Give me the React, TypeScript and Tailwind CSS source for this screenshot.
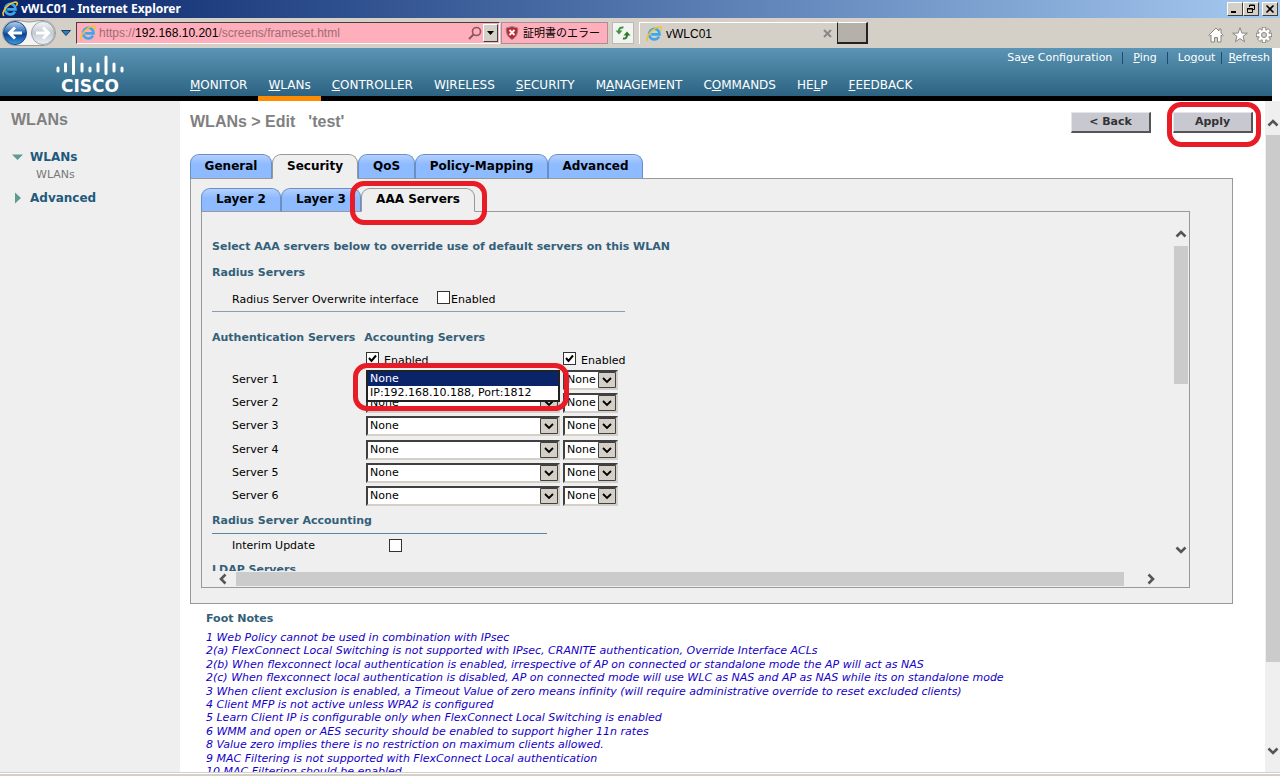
import type { ReactNode } from "react";
import clsx from "clsx";

const navItems = [
  { before: "", key: "M", after: "ONITOR" },
  { before: "", key: "W", after: "LANs", active: true },
  { before: "", key: "C", after: "ONTROLLER" },
  { before: "W", key: "I", after: "RELESS" },
  { before: "", key: "S", after: "ECURITY" },
  { before: "M", key: "A", after: "NAGEMENT" },
  { before: "C", key: "O", after: "MMANDS" },
  { before: "HE", key: "L", after: "P" },
  { before: "", key: "F", after: "EEDBACK" },
];

const mainTabs = [
  { label: "General", width: "w-[82px]" },
  { label: "Security", width: "w-[86px]", active: true },
  { label: "QoS", width: "w-[57px]" },
  { label: "Policy-Mapping", width: "w-[133px]" },
  { label: "Advanced", width: "w-[95px]" },
];

const footNotes = [
  "1 Web Policy cannot be used in combination with IPsec",
  "2(a) FlexConnect Local Switching is not supported with IPsec, CRANITE authentication, Override Interface ACLs",
  "2(b) When flexconnect local authentication is enabled, irrespective of AP on connected or standalone mode the AP will act as NAS",
  "2(c) When flexconnect local authentication is disabled, AP on connected mode will use WLC as NAS and AP as NAS while its on standalone mode",
  "3 When client exclusion is enabled, a Timeout Value of zero means infinity (will require administrative override to reset excluded clients)",
  "4 Client MFP is not active unless WPA2 is configured",
  "5 Learn Client IP is configurable only when FlexConnect Local Switching is enabled",
  "6 WMM and open or AES security should be enabled to support higher 11n rates",
  "8 Value zero implies there is no restriction on maximum clients allowed.",
  "9 MAC Filtering is not supported with FlexConnect Local authentication",
  "10 MAC Filtering should be enabled.",
];

const IconIE = () => (
  <svg viewBox="0 0 16 16" className="size-4 shrink-0" aria-hidden="true">
    <path
      d="M13 10.6A5.3 5.3 0 1 1 13.6 8.4H5.2"
      fill="none"
      stroke="#3fa6e8"
      strokeWidth="2.6"
    />
    <path
      d="M2 14.8C-.6 13 2.6 7 7 3.8 10.6 1.2 15 .2 15.2 2.2c.1.8-.3 1.8-.9 2.6"
      fill="none"
      stroke="#f2c230"
      strokeWidth="1.6"
    />
  </svg>
);

const IconBackForward = () => (
  <svg viewBox="0 0 58 28" className="h-7 w-[58px] shrink-0" aria-hidden="true">
    <defs>
      <linearGradient id="backBall" x1="0" y1="0" x2="0" y2="1">
        <stop offset="0" stopColor="#b9d3ee" />
        <stop offset=".45" stopColor="#2f6fb8" />
        <stop offset=".55" stopColor="#0d3f92" />
        <stop offset="1" stopColor="#3aa0e6" />
      </linearGradient>
      <linearGradient id="forwardBall" x1="0" y1="0" x2="0" y2="1">
        <stop offset="0" stopColor="#f5f7f9" />
        <stop offset=".5" stopColor="#c3cad2" />
        <stop offset="1" stopColor="#eef2f6" />
      </linearGradient>
    </defs>
    <path
      d="M15 1.500C21 1 23 3 29 3s8-2 14-1.500A12.500 12.500 0 0 1 43 26.500H15A12.500 12.500 0 0 1 15 1.500Z"
      fill="#f4f4f2"
      stroke="#9a9a98"
    />
    <circle cx="15" cy="14" r="11.500" fill="url(#backBall)" stroke="#1d4a86" />
    <path
      d="M22 14H10M15 8.500 9.500 14l5.500 5.500"
      fill="none"
      stroke="#fff"
      strokeWidth="3"
    />
    <circle cx="43" cy="14" r="11.500" fill="url(#forwardBall)" stroke="#9aa3ad" />
    <path
      d="M36 14h12M43 8.500 48.500 14 43 19.500"
      fill="none"
      stroke="#fff"
      strokeWidth="3"
    />
  </svg>
);

const IconShield = () => (
  <svg viewBox="0 0 14 14" className="size-[14px] shrink-0" aria-hidden="true">
    <path
      d="M7 .5 12.800 2c.3 5-1.300 9-5.800 11.500C2.500 11 .9 7 1.200 2Z"
      fill="#c3242f"
      stroke="#8d8d8d"
    />
    <path d="m4.500 4 5 5m0-5-5 5" stroke="#fff" strokeWidth="1.800" />
  </svg>
);

const IconSearch = () => (
  <svg viewBox="0 0 14 14" className="size-[14px] shrink-0" aria-hidden="true">
    <circle cx="8.500" cy="5.500" r="4" fill="none" stroke="#8c5560" strokeWidth="1.600" />
    <path d="M5.500 8.500 1 13" stroke="#8c5560" strokeWidth="2" />
  </svg>
);

// one arrow up on the left, one down on the right
const IconRefresh = () => (
  <svg viewBox="0 0 16 16" className="size-4" aria-hidden="true">
    <path d="M8.500 2.500C5.500 2 4 3.500 4 6" fill="none" stroke="#3f9440" strokeWidth="2" />
    <path d="M.5 5.500h7L4 9.500Z" fill="#3f9440" />
    <path d="M8 13.500c3 .5 4-1 4-3.500" fill="none" stroke="#2a7a2c" strokeWidth="2" />
    <path d="M8.500 10.500h7L12 6.500Z" fill="#2a7a2c" />
  </svg>
);

const IconHome = () => (
  <svg viewBox="0 0 16 16" className="size-4" aria-hidden="true">
    <path
      d="M8 1 .8 8.200l1 1L3 8v7h3.500v-4.500h3V15H13V8l1.200 1.200 1-1L13 6V2h-2v2Z"
      fill="#fff"
      stroke="#8a8680"
    />
  </svg>
);

const IconStar = () => (
  <svg viewBox="0 0 16 16" className="size-4" aria-hidden="true">
    <path
      d="m8 .8 1.900 5.300h5.500L11 9.400l1.600 5.400L8 11.600l-4.600 3.200L5 9.400.6 6.100h5.500Z"
      fill="#fff"
      stroke="#8a8680"
    />
  </svg>
);

const IconGear = () => (
  <svg viewBox="0 0 16 16" className="size-4" aria-hidden="true">
    <g stroke="#8a8680" strokeWidth="4.400">
      <path d="M8 0v16M0 8h16M2.500 2.500l11 11M13.500 2.500l-11 11" />
    </g>
    <g stroke="#fff" strokeWidth="2.600">
      <path d="M8 .8v14.400M.8 8h14.400M3 3l10 10M13 3 3 13" />
    </g>
    <circle cx="8" cy="8" r="5" fill="#fff" />
    <circle cx="8" cy="8" r="2.500" fill="#d4d0c8" stroke="#8a8680" />
  </svg>
);

const CiscoBars = () => (
  <svg viewBox="0 0 68 20" className="h-5 w-[68px]" aria-hidden="true">
    <g stroke="#fff" strokeWidth="3" strokeLinecap="round">
      <path d="M2 13v3M9.500 9v7M17.500 2v16.500M26 9v7M34 13v3M42 9v7M50 2v16.500M58 9v7M66 13v3" />
    </g>
  </svg>
);

const turns = {
  up: "rotate-0",
  right: "rotate-90",
  down: "rotate-180",
  left: "-rotate-90",
};

const ScrollArrow = ({ dir }: { dir: keyof typeof turns }) => (
  <button
    type="button"
    aria-label={`Scroll ${dir}`}
    className="flex size-4 shrink-0 items-center justify-center"
  >
    <svg viewBox="0 0 12 12" className={clsx("size-3", turns[dir])}>
      <path d="M1.500 8.500 6 4l4.500 4.500" fill="none" stroke="#555" strokeWidth="2.600" />
    </svg>
  </button>
);

const Highlight = ({ className }: { className: string }) => (
  <span
    className={clsx(
      "pointer-events-none absolute rounded-[14px] border-[5px] border-[#e81c26]",
      className,
    )}
  />
);

const WindowButton = ({ label, children }: { label: string; children: ReactNode }) => (
  <button
    type="button"
    aria-label={label}
    className="flex h-[14px] w-4 items-center justify-center border border-t-white border-r-[#404040] border-b-[#404040] border-l-white bg-[#d4d0c8]"
  >
    <svg viewBox="0 0 10 10" className="size-[10px]" fill="none" stroke="#000">
      {children}
    </svg>
  </button>
);

const CheckBox = ({ id, checked }: { id: string; checked?: boolean }) => (
  <span className="relative flex size-[13px] shrink-0">
    <input
      id={id}
      type="checkbox"
      defaultChecked={checked}
      className="peer size-[13px] appearance-none border border-[#333] bg-white"
    />
    <svg
      viewBox="0 0 13 13"
      className="pointer-events-none absolute inset-0 hidden peer-checked:block"
      aria-hidden="true"
    >
      <path d="m3 6 2.500 3L10 3.500" fill="none" stroke="#000" strokeWidth="2" />
    </svg>
  </span>
);

const ServerSelect = ({ label, className }: { label: string; className: string }) => (
  <div className={clsx("relative h-5", className)}>
    <select
      aria-label={label}
      className="block h-5 w-full appearance-none border-2 border-t-[#404040] border-r-[#d4d0c8] border-b-[#d4d0c8] border-l-[#404040] bg-white pl-[2px] text-[11px] leading-4"
    >
      <option>None</option>
      <option>IP:192.168.10.188, Port:1812</option>
    </select>
    <svg
      viewBox="0 0 18 16"
      className="pointer-events-none absolute top-[2px] right-[2px] h-4 w-[18px]"
      aria-hidden="true"
    >
      <path d="M.5.5h17v15H.5z" fill="#d4d0c8" stroke="#404040" />
      <path d="m5 6 4 4 4-4" fill="none" stroke="#000" strokeWidth="1.800" />
    </svg>
  </div>
);

const Tab = ({
  active,
  className,
  children,
}: {
  active?: boolean;
  className: string;
  children: ReactNode;
}) => (
  <button
    type="button"
    role="tab"
    aria-selected={!!active}
    className={clsx(
      "rounded-t-[9px] border pb-[2px] text-[12px] leading-4 font-bold text-black",
      active
        ? "border-[#999] border-b-[#efefef] bg-[#efefef]"
        : "border-[#6a8fc4] border-b-[#999] bg-linear-to-b from-[#b5d0ff] to-[#8ebbff] to-40%",
      className,
    )}
  >
    {children}
  </button>
);

const TitleBar = () => (
  <div className="flex h-[18px] shrink-0 items-center bg-linear-to-r from-[#0a246a] to-[#a6caf0] pr-[2px] pl-[2px]">
    <IconIE />
    <h1 className="ml-[3px] font-['Noto_Sans',sans-serif] text-[12px] leading-4 font-bold text-white">
      vWLC01 - Internet Explorer
    </h1>
    <div className="ml-auto flex">
      <WindowButton label="Minimize">
        <path d="M1 8h5" strokeWidth="2" />
      </WindowButton>
      <WindowButton label="Restore">
        <path d="M3.500 3V1h5v4.500H7M1.500 4.500h5v4h-5zM3 1.500h6M1 5h6" />
      </WindowButton>
      <span className="w-[3px]" />
      <WindowButton label="Close">
        <path d="m1.500 1.500 7 7m0-7-7 7" strokeWidth="1.600" />
      </WindowButton>
    </div>
  </div>
);

const BrowserBar = () => (
  <div className="flex h-[30px] shrink-0 items-center bg-[#d4d0c8] font-['Liberation_Sans','Noto_Sans_CJK_JP',sans-serif] text-[12px] leading-4">
    <IconBackForward />
    <svg viewBox="0 0 10 6" className="mx-[3px] h-[6px] w-[10px]" aria-hidden="true">
      <path d="M.5.5h9L5 5.500Z" fill="#2b7cc0" stroke="#1a3f66" />
    </svg>
    <div className="ml-[2px] flex h-[22px] w-[424px] items-center border border-t-[#404040] border-r-white border-b-white border-l-[#404040] bg-[#ffaebb] pl-[3px]">
      <IconIE />
      <p className="ml-[3px] flex-1 text-[#a06c76]">
        https://<span className="text-black">192.168.10.201</span>/screens/frameset.html
      </p>
      <IconSearch />
      <button
        type="button"
        aria-label="Show address list"
        className="mx-[1px] flex h-[18px] w-[15px] items-center justify-center border border-t-white border-r-[#404040] border-b-[#404040] border-l-white bg-[#d4d0c8]"
      >
        <svg viewBox="0 0 7 4" className="h-1 w-[7px]">
          <path d="M0 0h7L3.500 4Z" />
        </svg>
      </button>
    </div>
    <button
      type="button"
      className="ml-px flex h-[22px] w-[107px] items-center gap-[4px] border border-[#b08a9c] bg-[#ffaebb] pl-[3px] text-[11px] whitespace-nowrap"
    >
      <IconShield />
      証明書のエラー
    </button>
    <button
      type="button"
      aria-label="Refresh"
      className="ml-1 flex h-[22px] w-[22px] items-center justify-center border border-[#b9b9b9] bg-[#f2f4f2]"
    >
      <IconRefresh />
    </button>
    <div className="ml-[5px] flex h-[22px] w-[198px] items-center border-t border-l border-white pl-[6px]">
      <IconIE />
      <span className="ml-1">vWLC01</span>
      <button type="button" aria-label="Close tab" className="mr-[5px] ml-auto">
        <svg viewBox="0 0 9 9" className="size-[9px]">
          <path d="m1 1 7 7m0-7-7 7" stroke="#888" strokeWidth="2" />
        </svg>
      </button>
    </div>
    <button
      type="button"
      aria-label="New tab"
      className="h-[22px] w-[31px] border border-t-white border-r-2 border-r-[#222] border-b-2 border-b-[#222] border-l-[#222] bg-[#b5b1aa]"
    />
    <div className="mt-1 mr-2 ml-auto flex gap-2">
      <IconHome />
      <IconStar />
      <IconGear />
    </div>
  </div>
);

const Header = () => (
  <header className="mr-2 flex h-[53px] shrink-0 bg-[linear-gradient(#5b94b4,#2c6382_48px,#000_48px)] text-white">
    <div className="flex w-[180px] shrink-0 flex-col items-center pt-[7px]">
      <CiscoBars />
      <span className="mt-px text-[17px] leading-[20px] font-bold">CISCO</span>
    </div>
    <nav className="flex items-end gap-px">
      {navItems.map((item) => (
        <a
          key={item.before + item.key + item.after}
          href="#"
          className={clsx(
            "border-b-[5px] px-[10px] pb-[3px] text-[12px] leading-4",
            item.active ? "border-[#ff8c00]" : "border-transparent",
          )}
        >
          {item.before}
          <u>{item.key}</u>
          {item.after}
        </a>
      ))}
    </nav>
    <div className="mt-[2px] mr-[2px] ml-auto flex h-4 items-center text-[11px] leading-4 whitespace-nowrap">
      <a href="#">
        Sa<u>v</u>e Configuration
      </a>
      <span className="mx-[10px] h-3 w-px bg-[#1c4a78]" />
      <a href="#">
        <u>P</u>ing
      </a>
      <span className="mx-[10px] h-3 w-px bg-[#1c4a78]" />
      <a href="#">
        Lo<u>g</u>out
      </a>
      <span className="mx-[6px] h-3 w-px bg-[#1c4a78]" />
      <a href="#">
        <u>R</u>efresh
      </a>
    </div>
  </header>
);

const Sidebar = () => (
  <aside className="w-[180px] shrink-0 bg-[#efefef] text-[#1f5a7c]">
    <h2 className="mt-[9px] ml-[11px] font-['Liberation_Sans',sans-serif] text-[16px] leading-5 font-bold text-[#808080]">
      WLANs
    </h2>
    <a href="#" className="mt-[19px] ml-3 flex items-center text-[12px] leading-4 font-bold">
      <svg viewBox="0 0 12 12" className="mr-[6px] size-3">
        <path d="M0 3.500h11L5.500 9Z" fill="#5f9a94" />
      </svg>
      WLANs
    </a>
    <a href="#" className="mt-[2px] ml-9 block text-[11px] leading-4 text-[#777]">
      WLANs
    </a>
    <a href="#" className="mt-[7px] ml-3 flex items-center text-[12px] leading-4 font-bold">
      <svg viewBox="0 0 12 12" className="mr-[6px] size-3">
        <path d="M3 .5v11L9 6Z" fill="#5f9a94" />
      </svg>
      Advanced
    </a>
  </aside>
);

const ServerTable = () => (
  <table className="text-left">
    <thead>
      <tr className="h-[23px] align-bottom">
        <td className="w-[154px] p-0" />
        <th className="w-[197px] p-0 font-normal">
          <div className="flex gap-[5px]">
            <CheckBox id="auth-enabled" checked />
            <label htmlFor="auth-enabled" className="mt-[2px]">
              Enabled
            </label>
          </div>
        </th>
        <th className="p-0 font-normal">
          <div className="flex gap-[5px]">
            <CheckBox id="acct-enabled" checked />
            <label htmlFor="acct-enabled" className="mt-[2px]">
              Enabled
            </label>
          </div>
        </th>
      </tr>
    </thead>
    <tbody className="h-[140px]">
      {[1, 2, 3, 4, 5, 6].map((n) => (
        <tr key={n}>
          <th className="p-0 pl-5 font-normal">Server {n}</th>
          <td className="relative p-0">
            <ServerSelect label={`Authentication server ${n}`} className="w-[194px]" />
            {n === 1 && (
              <>
                <ul
                  role="listbox"
                  aria-label="Authentication server 1 options"
                  className="absolute top-[2px] left-0 z-10 w-[194px] border-2 border-[#222] bg-white leading-[14px]"
                >
                  <li role="option" aria-selected="true" className="bg-[#0a246a] pl-[2px] text-white">
                    None
                  </li>
                  <li role="option" aria-selected="false" className="pl-[2px]">
                    IP:192.168.10.188, Port:1812
                  </li>
                </ul>
                <Highlight className="-top-[5px] -left-[13px] z-20 h-[48px] w-[216px]" />
              </>
            )}
          </td>
          <td className="p-0">
            <ServerSelect label={`Accounting server ${n}`} className="w-[55px]" />
          </td>
        </tr>
      ))}
    </tbody>
  </table>
);

const AaaPanel = () => (
  <section className="-mt-px border border-[#999]">
    <div className="flex h-[359px]">
      <div className="flex-1 overflow-hidden pt-7 pl-[10px] text-[11px] leading-[14px] text-black">
        <h3 className="font-bold text-[#336079]">
          Select AAA servers below to override use of default servers on this WLAN
        </h3>
        <h3 className="mt-3 font-bold text-[#336079]">Radius Servers</h3>
        <div className="mt-[11px] flex h-[21px] w-[413px] border-b border-[#8e9bb0] pl-5">
          <label htmlFor="overwrite" className="mt-[2px] w-[205px]">
            Radius Server Overwrite interface
          </label>
          <CheckBox id="overwrite" />
          <label htmlFor="overwrite" className="mt-[2px] ml-px">
            Enabled
          </label>
        </div>
        <div className="mt-[19px] flex gap-[9px] font-bold text-[#336079]">
          <h3>Authentication Servers</h3>
          <h3>Accounting Servers</h3>
        </div>
        <ServerTable />
        <h3 className="mt-[6px] w-[335px] border-b border-[#5c86a0] pb-[5px] font-bold text-[#336079]">
          Radius Server Accounting
        </h3>
        <div className="mt-[5px] flex pl-5">
          <label htmlFor="interim" className="w-[157px]">
            Interim Update
          </label>
          <CheckBox id="interim" />
        </div>
        <h3 className="mt-[10px] font-bold text-[#336079]">LDAP Servers</h3>
      </div>
      <div className="mt-[14px] mr-px mb-[13px] flex w-[14px] flex-col items-center">
        <ScrollArrow dir="up" />
        <span className="mt-1 h-[138px] w-[14px] bg-[#cbcbcb]" />
        <span className="flex-1" />
        <ScrollArrow dir="down" />
      </div>
    </div>
    <div className="mb-px flex h-[15px] items-center pr-[30px] pl-[13px]">
      <ScrollArrow dir="left" />
      <span className="mr-[19px] ml-[5px] h-[14px] flex-1 bg-[#cbcbcb]" />
      <ScrollArrow dir="right" />
    </div>
  </section>
);

const BevelButton = ({ children }: { children: ReactNode }) => (
  <button
    type="button"
    className="h-[21px] w-20 border border-t-[#e4e4ea] border-r-2 border-r-[#555] border-b-2 border-b-[#555] border-l-[#e4e4ea] bg-[#c8c8d0] text-[11px] leading-4 font-bold text-[#333]"
  >
    {children}
  </button>
);

const Main = () => (
  <main className="flex-1 overflow-hidden bg-white pl-[10px]">
    <div className="flex items-start pt-[11px] pr-3">
      <h2 className="flex gap-[13px] font-['Liberation_Sans',sans-serif] text-[16px] leading-5 font-bold text-[#808080]">
        <span>WLANs &gt; Edit</span>
        <span>'test'</span>
      </h2>
      <div className="ml-auto flex gap-[22px]">
        <BevelButton>&lt; Back</BevelButton>
        <div className="relative flex">
          <BevelButton>Apply</BevelButton>
          <Highlight className="-top-[10px] -left-[6px] h-[45px] w-[94px]" />
        </div>
      </div>
    </div>
    <div role="tablist" className="mt-[21px] flex">
      {mainTabs.map((tab) => (
        <Tab key={tab.label} active={tab.active} className={clsx("relative h-[25px]", tab.width)}>
          {tab.label}
        </Tab>
      ))}
    </div>
    <div className="-mt-px mr-8 border border-[#999] bg-[#efefef] pt-[9px] pr-[42px] pb-[15px] pl-[10px]">
      <div role="tablist" className="relative z-10 flex">
        <Tab className="h-6 w-20">Layer 2</Tab>
        <Tab className="h-6 w-20">Layer 3</Tab>
        <div className="relative flex">
          <Tab active className="h-6 w-[114px]">
            AAA Servers
          </Tab>
          <Highlight className="-top-[7px] -left-[11px] h-[44px] w-[137px]" />
        </div>
      </div>
      <AaaPanel />
    </div>
    <section className="pt-2 pl-4 text-[11px]">
      <h3 className="leading-[14px] font-bold text-[#336079]">Foot Notes</h3>
      <ul className="mt-[5px] flex h-[147px] flex-col justify-between leading-[13px] whitespace-nowrap text-[#1400c8] italic">
        {footNotes.map((note) => (
          <li key={note}>{note}</li>
        ))}
      </ul>
    </section>
  </main>
);

const App = () => {
  return (
    <div className="flex h-screen flex-col overflow-hidden bg-white font-['DejaVu_Sans',Verdana,sans-serif]">
      <TitleBar />
      <BrowserBar />
      <Header />
      <div className="flex min-h-0 flex-1">
        <Sidebar />
        <Main />
        <div className="flex w-[15px] shrink-0 flex-col items-center bg-[#efefef] pt-[14px] pb-[13px]">
          <ScrollArrow dir="up" />
          <span className="mt-1 h-[527px] w-[14px] bg-[#cbcbcb]" />
          <span className="flex-1" />
          <ScrollArrow dir="down" />
        </div>
      </div>
      <div className="h-1 shrink-0 border-t border-[#d4d0c8] bg-white">
        <div className="mt-px h-[2px] bg-[#d4d0c8]" />
      </div>
    </div>
  );
};

export default App;
